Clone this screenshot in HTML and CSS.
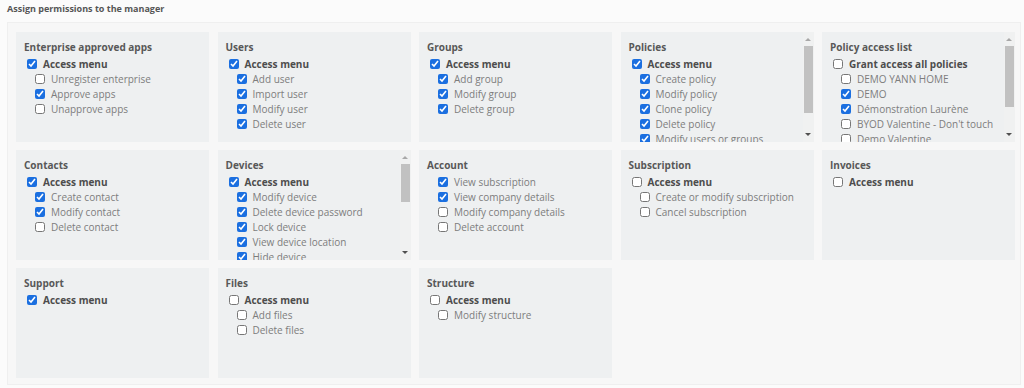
FILE: index.html
```html
<!DOCTYPE html>
<html lang="en">
<head>
  <meta charset="UTF-8" />
  <title>Manager permissions</title>
  <link rel="stylesheet" href="styles.css">
</head>
<body>
  <p class="heading">Assign permissions to the manager</p>

  <div class="panel">
    <!-- row 1 -->
    <div class="card">
      <div class="card-body">
        <h3 class="card-title">Enterprise approved apps</h3>
        <label class="item main"><input type="checkbox" checked> Access menu</label>
        <div class="subs">
          <label class="item"><input type="checkbox"> Unregister enterprise</label>
          <label class="item"><input type="checkbox" checked> Approve apps</label>
          <label class="item"><input type="checkbox"> Unapprove apps</label>
        </div>
      </div>
    </div>

    <div class="card">
      <div class="card-body">
        <h3 class="card-title">Users</h3>
        <label class="item main"><input type="checkbox" checked> Access menu</label>
        <div class="subs">
          <label class="item"><input type="checkbox" checked> Add user</label>
          <label class="item"><input type="checkbox" checked> Import user</label>
          <label class="item"><input type="checkbox" checked> Modify user</label>
          <label class="item"><input type="checkbox" checked> Delete user</label>
        </div>
      </div>
    </div>

    <div class="card">
      <div class="card-body">
        <h3 class="card-title">Groups</h3>
        <label class="item main"><input type="checkbox" checked> Access menu</label>
        <div class="subs">
          <label class="item"><input type="checkbox" checked> Add group</label>
          <label class="item"><input type="checkbox" checked> Modify group</label>
          <label class="item"><input type="checkbox" checked> Delete group</label>
        </div>
      </div>
    </div>

    <div class="card">
      <div class="card-body">
        <h3 class="card-title">Policies</h3>
        <label class="item main"><input type="checkbox" checked> Access menu</label>
        <div class="subs">
          <label class="item"><input type="checkbox" checked> Create policy</label>
          <label class="item"><input type="checkbox" checked> Modify policy</label>
          <label class="item"><input type="checkbox" checked> Clone policy</label>
          <label class="item"><input type="checkbox" checked> Delete policy</label>
          <label class="item"><input type="checkbox" checked> Modify users or groups</label>
          <label class="item"><input type="checkbox" checked> Assign policy</label>
        </div>
      </div>
      <div class="scrollbar">
        <span class="arrow up"></span>
        <div class="track"><div class="thumb" style="height:67px"></div></div>
        <span class="arrow down"></span>
      </div>
    </div>

    <div class="card">
      <div class="card-body">
        <h3 class="card-title">Policy access list</h3>
        <label class="item main"><input type="checkbox"> Grant access all policies</label>
        <div class="subs">
          <label class="item"><input type="checkbox"> DEMO YANN HOME</label>
          <label class="item"><input type="checkbox" checked> DEMO</label>
          <label class="item"><input type="checkbox" checked> Démonstration Laurène</label>
          <label class="item"><input type="checkbox"> BYOD Valentine - Don't touch</label>
          <label class="item"><input type="checkbox"> Demo Valentine</label>
          <label class="item"><input type="checkbox"> Default policy</label>
        </div>
      </div>
      <div class="scrollbar">
        <span class="arrow up"></span>
        <div class="track"><div class="thumb" style="height:61px"></div></div>
        <span class="arrow down"></span>
      </div>
    </div>

    <!-- row 2 -->
    <div class="card">
      <div class="card-body">
        <h3 class="card-title">Contacts</h3>
        <label class="item main"><input type="checkbox" checked> Access menu</label>
        <div class="subs">
          <label class="item"><input type="checkbox" checked> Create contact</label>
          <label class="item"><input type="checkbox" checked> Modify contact</label>
          <label class="item"><input type="checkbox"> Delete contact</label>
        </div>
      </div>
    </div>

    <div class="card">
      <div class="card-body">
        <h3 class="card-title">Devices</h3>
        <label class="item main"><input type="checkbox" checked> Access menu</label>
        <div class="subs">
          <label class="item"><input type="checkbox" checked> Modify device</label>
          <label class="item"><input type="checkbox" checked> Delete device password</label>
          <label class="item"><input type="checkbox" checked> Lock device</label>
          <label class="item"><input type="checkbox" checked> View device location</label>
          <label class="item"><input type="checkbox" checked> Hide device</label>
          <label class="item"><input type="checkbox" checked> Wipe device</label>
          <label class="item"><input type="checkbox" checked> Reboot device</label>
        </div>
      </div>
      <div class="scrollbar">
        <span class="arrow up"></span>
        <div class="track"><div class="thumb" style="height:38px"></div></div>
        <span class="arrow down"></span>
      </div>
    </div>

    <div class="card">
      <div class="card-body">
        <h3 class="card-title">Account</h3>
        <div class="subs">
          <label class="item"><input type="checkbox" checked> View subscription</label>
          <label class="item"><input type="checkbox" checked> View company details</label>
          <label class="item"><input type="checkbox"> Modify company details</label>
          <label class="item"><input type="checkbox"> Delete account</label>
        </div>
      </div>
    </div>

    <div class="card">
      <div class="card-body">
        <h3 class="card-title">Subscription</h3>
        <label class="item main"><input type="checkbox"> Access menu</label>
        <div class="subs">
          <label class="item"><input type="checkbox"> Create or modify subscription</label>
          <label class="item"><input type="checkbox"> Cancel subscription</label>
        </div>
      </div>
    </div>

    <div class="card">
      <div class="card-body">
        <h3 class="card-title">Invoices</h3>
        <label class="item main"><input type="checkbox"> Access menu</label>
      </div>
    </div>

    <!-- row 3 -->
    <div class="card">
      <div class="card-body">
        <h3 class="card-title">Support</h3>
        <label class="item main"><input type="checkbox" checked> Access menu</label>
      </div>
    </div>

    <div class="card">
      <div class="card-body">
        <h3 class="card-title">Files</h3>
        <label class="item main"><input type="checkbox"> Access menu</label>
        <div class="subs">
          <label class="item"><input type="checkbox"> Add files</label>
          <label class="item"><input type="checkbox"> Delete files</label>
        </div>
      </div>
    </div>

    <div class="card">
      <div class="card-body">
        <h3 class="card-title">Structure</h3>
        <label class="item main"><input type="checkbox"> Access menu</label>
        <div class="subs">
          <label class="item"><input type="checkbox"> Modify structure</label>
        </div>
      </div>
    </div>
  </div>
</body>
</html>
```

FILE: styles.css
```css
* {
  margin: 0;
  padding: 0;
  box-sizing: border-box;
}
body {
  width: 1024px;
  height: 388px;
  font-family: 'Open Sans', 'Liberation Sans', sans-serif;
  background: #fbfbfb;
  color: #555;
  overflow: hidden;
}

.heading {
  margin: 2px 7px 6px;
  font-size: 9px;
  line-height: 14px;
  font-weight: 700;
  color: #555;
}

.panel {
  margin: 0 3px 0 7px;
  padding: 9px 5px 6px 8px;
  background: #f7f7f7;
  border: 1px solid #efefef;
  display: grid;
  grid-template-columns: repeat(5, 1fr);
  grid-auto-rows: 110px;
  column-gap: 8.5px;
  row-gap: 8px;
}

.card {
  display: flex;
  background: #eef0f1;
  overflow: hidden;
}
.card-body {
  flex: 1;
  min-width: 0;
  padding: 8px 0 0 8px;
}

.card-title {
  font-size: 10px;
  line-height: 14px;
  font-weight: 700;
  color: #585858;
  margin-bottom: 2px;
}

.item {
  display: flex;
  align-items: center;
  height: 15px;
  font-size: 10px;
  color: #7d7d7d;
  white-space: nowrap;
  gap: 6px;
}
.item input {
  width: 10px;
  height: 10px;
  margin: 0;
  flex: none;
  accent-color: #1b6fe0;
}
.item.main {
  padding-left: 3px;
  font-weight: 700;
  color: #4d4d4d;
}
.subs .item {
  padding-left: 11px;
}

/* fake scrollbar */
.scrollbar {
  width: 11px;
  flex: none;
  display: flex;
  flex-direction: column;
  align-items: center;
  padding: 4px 1px 2px 0;
  background: #f0f1f1;
}
.arrow {
  width: 0;
  height: 0;
  border-left: 3px solid transparent;
  border-right: 3px solid transparent;
  margin: 2px 0 4px;
}
.arrow.up {
  border-bottom: 3px solid #a8a8a8;
}
.arrow.down {
  border-top: 3px solid #505050;
  margin: 4px 0 4px;
}
.track {
  flex: 1;
  width: 100%;
  padding-left: 1px;
}
.thumb {
  width: 100%;
  margin-top: 1px;
  background: #c1c1c1;
}
```
